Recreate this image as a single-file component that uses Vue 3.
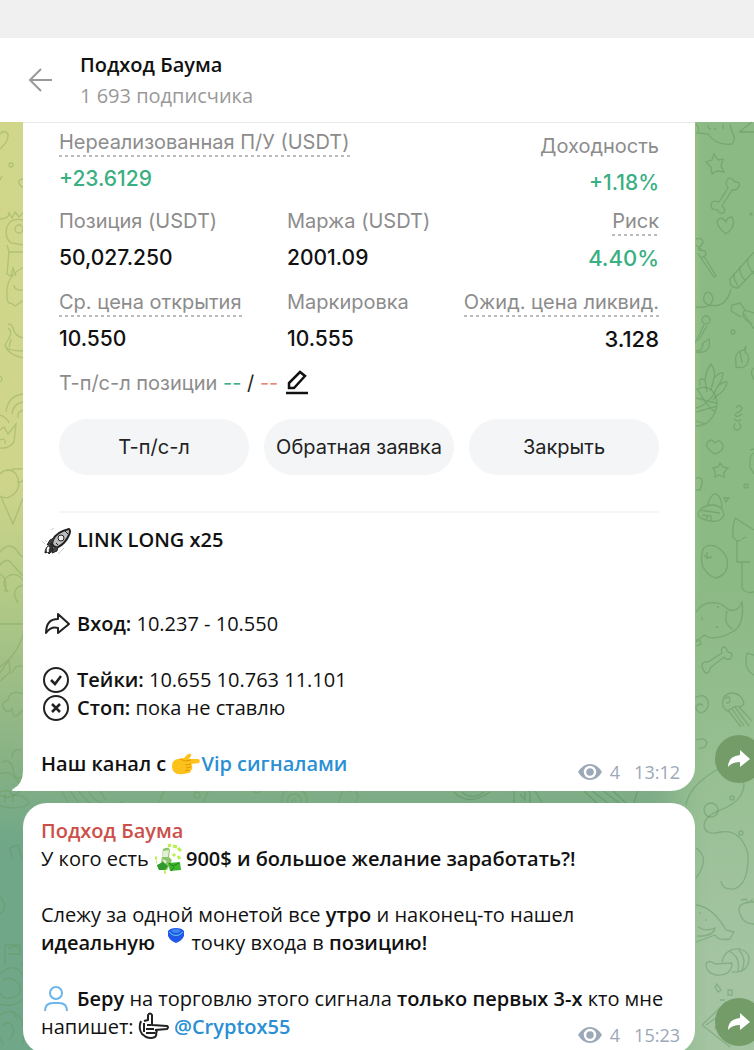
<template>
  <div class="chat-app">
    <div class="top-strip"></div>

    <header class="chat-header">
      <button class="icon-btn" aria-label="Назад">
        <svg width="26" height="26" viewBox="0 0 26 26" fill="none" stroke="#999999" stroke-width="2">
          <path d="M24 13H2M13 2 2 13l11 11" />
        </svg>
      </button>
      <div>
        <h1 class="chat-title">Подход Баума</h1>
        <p class="chat-subtitle">1 693 подписчика</p>
      </div>
    </header>

    <main class="chat-body">
      <!-- Wallpaper doodles -->
      <svg class="doodles doodles-left" width="420" height="928" viewBox="0 0 420 928" aria-hidden="true">
        <path d="M0 12q4-5 8 0 1 7-8 15" />
        <circle cx="11" cy="43" r="2" />
        <path d="M24 57q-6 0-5 4t5 4M0 58l2-4" />
        <path d="M0 97q9 0 9-6l3 5 3-6 4 5 5-5M24 98q-14-3-17 7t4 16l13 2M7 123l2 7h15M9 130l-2 22 4 2 2-8 3 8M24 145q-16 8-17 23t4 13l4 3 9-6M14 163q0 6 10 5" />
        <circle cx="19" cy="107" r="4" />
        <path d="M8 203q3-3 5 3 2 9 11 10M8 206q5 4 1 10l-4 7q1 6 19 6M11 217l-2 8M5 223q3 10 19 13" />
        <path d="M0 254q4 3 0 6M24 272q-16 1-18 18M24 280q-11 1-12 12M0 293q7 2 9 8M24 288q-7 1-6 8" />
        <path d="M0 308l4-3 4 7 8-10-2 18q-5 7-14 6M0 318q6-3 5 4" />
        <path d="M0 352q8-8 16 0 6 11-1 19-8 8-15 3M24 347q-9-1-17 2M1 375l12 27 10-26M17 360q5 1 7-3" />
        <path d="M0 430q11-13 20 3l4 2M0 443q7-9 13 0l11 12M8 470q-9-11 2-17 10-2 14 7M18 481q-9-15 6-18M0 452q8 4 5 18" />
        <path d="M0 502h24M24 506q-3 24-24 39M24 545q-8-4-12 6M0 551l9-13 1 12-10 9" />
        <path d="M24 572q-14-5-16 6-8 2-4 9 4 5 8 0 1 11 7 5 3-4 5-4" />
        <path d="M12 636q0-10 9-8M2 641q5-5 10 2l3 12q12 5 9-16M0 652q9-4 15 4 8 8 5 13-11 10-20 4M6 664h1M13 663h1" />
        <path d="M0 670q10-4 12 3 13-1 17 8-7 8-29 3M5 672v8M13 674v6" />
        <path d="M60 666l10 18M68 666l13 18M76 666l16 18M88 668q5 14 26 15l10-4M98 666l8 12M166 666l-9 17M210 666l-7 14M252 666q3 8 9 3M339 678q5-15 10-8 6-5 9 4-2 12-10 7-8 6-9-3" />
        <circle cx="197" cy="673" r="3" />
        <path d="M282 684q-3-17 12-17t13 17M288 684q-2-12 6-12t7 11M292 681q1-6 4-2" />
        <path d="M12 736l-2-10 8-3 4 14 2 3M0 775q7 7 3 14l-3 3M5 843v-20h15v9H8M8 827l6-3 6 3M0 852q15-14 24 3M0 882q14 4 24-5M3 858q8-5 16 4 3 9-2 12-12 6-17-3M24 837l-2 6" />
        <path d="M0 893q12-9 21 4 6 13 1 26M2 904q7-7 11 1 2 9-4 12M0 915l3 8M12 889l5 8" />
      </svg>
      <svg class="doodles doodles-mid" width="220" height="20" viewBox="0 0 220 20" aria-hidden="true">
        <path d="M10 3q14 15 36 0M18 3q10 9 22 0M70 17V1q10-3 16 2v13M76 5l5 6V3M91 2l9 15M140 2l16 15M148 2l20 15M158 1l21 16M168 1l17 16M194 1l-5 16" />
      </svg>
      <svg class="doodles doodles-right" width="70" height="928" viewBox="0 0 70 928" aria-hidden="true">
        <path d="M12 2q5 5 1 9l11 1q8 12 24 10 5-6 0-12L46 2M24 3q0 4 3 4M30 7h2M39 2v5M55 10 68 0M56 10h14" />
        <path d="M30 32l4 6 5-1-2 7 3 6-7-1-5 3-1-7-5-5 6-2zM42 62q1-8 6-5l3 3q7 0 3 6-3 3-6 2L38 84q5 4 1 7-5 1-5-3-7 0-7-4 0-7 8-4l9-14z" />
        <path d="M42 112q-9-7-9-13 4-6 9 1 1-5 6-5 5 9-6 17zM12 117q7-2 7 4l-5 6M12 123l6 5M14 128l7 1 1 4-5 3-3-5M17 136l13 19 2-1-12-20" />
        <path d="M70 130 46 157q-1 9 8 9l16-17M50 151q-1 5 4 13M56 144q-1 9 6 15M64 137q-2 6 6 15" />
        <path d="M12 185q16 2 17-9-3-9-8-4-4 8 4 11 17 4 22-16M47 189l1-6 8-2 5 7 9 3M47 189l10 6M61 188q-6 7 7 14M60 192l10 15" />
        <circle cx="22" cy="198" r="4" />
        <path d="M20 203l-9 18M23 204l-9 15M12 228q6 3 7-7l6-4q3 15-13 13M52 241q-2-8 4-12l4-1 2-4-1 6q6 4 2 12-3 5-11 3zM56 230l2 11" />
        <circle cx="67" cy="92" r="1" />
        <circle cx="49" cy="210" r="2" />
        <path d="M16 264q-2-10 5-6 1-10 6-16 5 7 3 14 6-6 9-5-1 8-5 13 6-5 9-4-1 9-11 14l-3 4M23 270l-2-12M27 268l3-12M30 271l4-7" />
        <path d="M12 268q5-4 12-2 8 4 9 14 0 12-9 20-5 4-12 4M12 276l20 5M12 290l21-6M13 266q8 16 18 24M31 271q-9 13-19 15M12 299l10 3" />
        <path d="M52 286q3-5 6 0-1 4-6 5M51 292q1 5 7 0M50 297q5 4 7 0M51 301q-3 8 3 7 5-3 1-7M70 246q-5 3 0 12" />
        <path d="M31 332q-10-6-8-11 4-6 8 0 5-5 8 2 1 6-8 9zM36 341l3 4 5 1-4 4 0 5-5-2-4 2 0-5-2-4 5-1zM12 356q7-2 6 6l-2 6h-4M70 331q-5 2-4 14l4 7M66 328l4-1" />
        <circle cx="62" cy="364" r="2" />
        <path d="M23 384q4-13 9-12 6 3 6 14M40 376h5l-3 4zM14 393q2-9 13-10 12 0 13 10-4 8-13 6-12-2-13-6M15 388l21 3M18 393l9 1v5M24 394l-2 4" />
        <path d="M51 396l19 12M51 396q-3 10-2 19 4 6 8 3M53 418v22h13M58 441v25q4 6 12 4M58 417l4-2" />
        <path d="M19 427q4-5 12-3 15 8 12 22-3 9-12 10-18-8-12-29M20 433l3 3 5-1M23 436v-6" />
        <path d="M12 490q8-13 25-8l8 6q11 2 13-9 3 25-10 31-18 10-28 3l-8 7M43 489q-4 14 6 18M18 495v3M33 485h2M32 505h2M12 518q5-1 5 4l-5 2" />
        <path d="M18 544q0-5 6-4l14-9q-2-6 3-6l3 5q7 1 2 7-5 1-6-2l-14 11q0 5-4 5-3-2-4-7zM63 531q-4 17 7 22M63 531l7 2" />
        <path d="M11 576q9-6 13 3 2 9-7 12-6-2-5-7 5-4 7 0M39 585q-2-12 8-14 11 0 13 11-3 4-8 2l-9 5zM41 577q4-4 5 0t-4 4M44 588l13 17M48 587l12 17M51 585l14 19M55 585l13 14" />
        <path d="M12 618q8-3 11 2-1 7-8 6M2 683q3-20 34-37Q58 640 60 663q-1 17-26 26-14 6-14 15 2 10 17 6 20-3 27 22 1 30-14 35-12 1-13-8" />
        <circle cx="27" cy="688" r="7" />
        <circle cx="48" cy="676" r="2" />
        <circle cx="57" cy="711" r="2" />
        <path d="M12 726q15 10 0 30M12 783q17 2 30 25l8 2-4 7q-12 2-15-4l-19 7M14 805q8 5 17 1-2 9-18 8M16 790v2M22 797v2M70 780q-19 0-14 12 3 10 14 10M57 778l5-1 2 4 5-4" />
        <path d="M22 842q2-5 9 0l17-1q0 13-16 12-10-2-10-11zM38 840q3-14 18-13 12 4 8 15-3 9-16 8M45 829q12 6 9 20M55 828q8 9 3 20M33 862l4 6-3 2-3-5zM44 868h4v5h-4zM36 878h5M18 903l24-23M18 903l28 22M22 903l21-15 14 12M40 892l-9 14 16 14" />
      </svg>

      <article class="message">
        <div class="bubble bubble-first">
          <section class="position-card">
            <div class="stat-row stat-row-wide">
              <div class="stat">
                <span class="stat-label hint">Нереализованная П/У (USDT)</span>
                <span class="stat-value profit">+23.6129</span>
              </div>
              <div class="stat stat-end stat-low">
                <span class="stat-label">Доходность</span>
                <span class="stat-value profit">+1.18%</span>
              </div>
            </div>
            <div v-for="(row, i) in statRows" :key="i" class="stat-row">
              <div
                v-for="stat in row"
                :key="stat.label"
                class="stat"
                :class="{ 'stat-end': stat.end }"
              >
                <span class="stat-label" :class="{ hint: stat.hint }">{{ stat.label }}</span>
                <span class="stat-value" :class="{ profit: stat.profit, large: stat.end }">{{ stat.value }}</span>
              </div>
            </div>

            <div class="tpsl-row">
              <span>Т-п/с-л позиции <span class="profit">--</span> <span class="slash">/</span> <span class="loss">--</span></span>
              <button class="icon-btn" aria-label="Изменить">
                <svg width="22" height="26" viewBox="0 0 22 26" fill="none" stroke="#111111" stroke-width="2.500">
                  <path d="M3 18v-5L14 2l5 4L8 18z" />
                  <path d="M0 23h22" />
                </svg>
              </button>
            </div>

            <div class="card-actions">
              <button v-for="action in actions" :key="action" class="btn-action">{{ action }}</button>
            </div>
            <hr class="card-divider">
          </section>

          <div class="message-text">
            <p>
              <svg class="emoji emoji-lead" width="30" height="28" viewBox="0 0 30 28" fill="none" stroke="#222222" stroke-linejoin="round">
                <path d="M12 14q3-8 16-11 2 2 0 6-4 9-11 12-4 1-6-3z" fill="#bdbdbd" stroke-width="2" />
                <path d="M13 12 9 14l-3 5 5-2M17 21l-1 4-5 2 1-5" fill="#444444" />
                <path d="M10 18q-6 3-6 9l3-1 1 2q4-3 4-7z" fill="#333333" />
                <path d="M8 21q-2 2-1 5" stroke="#ffffff" stroke-width="2" />
                <circle cx="20" cy="12" r="3" fill="#eeeeee" />
                <path d="M24 5l3 3M15 17l2 2" />
                <path d="M1 15l3 3M4 14l2 2M17 28l6-6M10 4l3-2" stroke="#cccccc" />
              </svg>
              <b>LINK LONG x25</b>
            </p>
            <p><br></p>
            <p><br></p>
            <p>
              <svg class="emoji emoji-lead" width="30" height="28" viewBox="0 0 30 28" fill="none" stroke="#222222" stroke-width="2" stroke-linejoin="round">
                <path d="M5 23Q5 9 17 9V4l11 10-11 9v-5q-7-2-12 5z" />
              </svg>
              <b>Вход:</b> 10.237 - 10.550
            </p>
            <p><br></p>
            <p>
              <svg class="emoji emoji-lead" width="30" height="28" viewBox="0 0 30 28" fill="none" stroke="#222222" stroke-width="2">
                <circle cx="15" cy="14" r="12" />
                <path d="M10 14l4 4 6-8" stroke-width="2.500" />
              </svg>
              <b>Тейки:</b> 10.655 10.763 11.101
            </p>
            <p>
              <svg class="emoji emoji-lead" width="30" height="28" viewBox="0 0 30 28" fill="none" stroke="#222222" stroke-width="2">
                <circle cx="15" cy="14" r="12" />
                <path d="M11 10l8 8M19 10l-8 8" stroke-width="2.500" />
              </svg>
              <b>Стоп:</b> пока не ставлю
            </p>
            <p><br></p>
            <p>
              <b>Наш канал с <svg class="emoji" width="30" height="28" viewBox="0 0 30 28">
                <path d="M1 16q0-6 6-7l6-1 4-4q4-1 3 2l-2 3h9q3 1 1 4l-8 1q2 1 1 3 1 2-1 3 0 3-3 3-10 3-14-1-2-2-2-6z" fill="#fcc21b" />
                <path d="M20 14l-6 1M20 17l-5 1M18 20l-4 1M9 9l5 2 6-1" fill="none" stroke="#e59600" />
              </svg><a href="#vip">Vip сигналами</a></b>
            </p>
          </div>
          <div class="message-meta">
            <svg width="24" height="18" viewBox="0 0 24 18">
              <path d="M0 9Q5 1 12 1t12 8q-5 8-12 8T0 9z" fill="#9aa8b8" />
              <circle cx="12" cy="9" r="5" fill="none" stroke="#ffffff" stroke-width="2.500" />
            </svg>
            <span>4</span>
            <time>13:12</time>
          </div>
          <svg class="bubble-tail" width="12" height="20" viewBox="0 0 12 20">
            <path d="M12 0v20H1q-2-1 0-2 10-5 10-18z" fill="#ffffff" />
          </svg>
        </div>
        <button class="btn-share" aria-label="Поделиться">
          <svg width="24" height="20" viewBox="0 0 24 20">
            <path d="M1 18Q1 7 13 6V1l10 9-10 8v-5Q5 13 1 18z" fill="#ffffff" />
          </svg>
        </button>
      </article>

      <article class="message">
        <div class="bubble">
          <div class="message-text">
            <p class="author">Подход Баума</p>
            <p>
              У кого есть <svg class="emoji" width="32" height="28" viewBox="0 0 32 28">
                <path d="M9 4q6-3 7 1l-1 7 3 3-5 10H5l-2-4 4-3z" fill="#8bc46b" />
                <path d="M9 6l6-1-1 7H8zM8 14l5 2-2 3" fill="#e4eed6" />
                <path d="M3 20l6-3 5 4-3 4H5z" fill="#2f9b2c" />
                <path d="M14 18l12-1 1 8-11 1z" fill="#3fb52c" />
                <path d="M15 18l4 3 6-3M17 26l3-4" fill="none" stroke="#1d7d18" />
                <path d="M14 1l3-1M19 1l4 1M24 3l3 3M1 13h2M2 17h1M19 9l2 2M24 11l2 3M10 27h2" fill="none" stroke="#b8ef50" stroke-width="3" />
              </svg><b>900$ и большое желание заработать?!</b>
            </p>
            <p><br></p>
            <p>Слежу за одной монетой все <b>утро</b> и наконец-то нашел</p>
            <p>
              <b>идеальную</b> <svg class="emoji" width="26" height="28" viewBox="0 0 26 28">
                <path d="M8 2q2-3 8-3t8 3v5q-2 5-8 7-6-2-8-7z" fill="#2257e8" />
                <path d="M11 2q2-2 5-2t5 2q-2 2-5 2t-5-2z" fill="#3f86ee" />
                <path d="M9 3l4 3q3 1 6 0l4-3" fill="none" stroke="#58c8f5" />
              </svg> точку входа в <b>позицию!</b>
            </p>
            <p><br></p>
            <p>
              <svg class="emoji emoji-lead" width="30" height="28" viewBox="0 0 30 28" fill="none" stroke="#6ab5ea" stroke-width="2">
                <circle cx="15" cy="8" r="6" />
                <path d="M4 26q0-8 8-8h6q8 0 8 8" />
              </svg>
              <b>Беру</b> на торговлю этого сигнала <b>только первых 3-х</b> кто мне
            </p>
            <p>
              напишет: <svg class="emoji" width="30" height="28" viewBox="2 0 30 28" fill="none" stroke="#222222" stroke-width="2" stroke-linejoin="round">
                <path d="M7 8 11 7V2q2-3 4 0v10l15 1q2 1 0 3l-12 1" />
                <path d="M4 8q-3 7 1 13l4 3q5 2 9 0 2-2 1-4 2-2-1-3M7 10v9M10 12h4M9 16h8M9 20h9" />
              </svg> <a href="#cryptox55"><b>@Cryptox55</b></a>
            </p>
          </div>
          <div class="message-meta">
            <svg width="24" height="18" viewBox="0 0 24 18">
              <path d="M0 9Q5 1 12 1t12 8q-5 8-12 8T0 9z" fill="#9aa8b8" />
              <circle cx="12" cy="9" r="5" fill="none" stroke="#ffffff" stroke-width="2.500" />
            </svg>
            <span>4</span>
            <time>15:23</time>
          </div>
        </div>
        <button class="btn-share" aria-label="Поделиться">
          <svg width="24" height="20" viewBox="0 0 24 20">
            <path d="M1 18Q1 7 13 6V1l10 9-10 8v-5Q5 13 1 18z" fill="#ffffff" />
          </svg>
        </button>
      </article>
    </main>
  </div>
</template>

<script setup>
const statRows = [
  [
    { label: 'Позиция (USDT)', value: '50,027.250' },
    { label: 'Маржа (USDT)', value: '2001.09' },
    { label: 'Риск', value: '4.40%', hint: true, profit: true, end: true }
  ],
  [
    { label: 'Ср. цена открытия', value: '10.550', hint: true },
    { label: 'Маркировка', value: '10.555' },
    { label: 'Ожид. цена ликвид.', value: '3.128', hint: true, end: true }
  ]
]

const actions = ['Т-п/с-л', 'Обратная заявка', 'Закрыть']
</script>

<style>
body {
  margin: 0;
}
</style>

<style scoped>
.chat-app {
  display: flex;
  flex-direction: column;
  height: 100vh;
  overflow: hidden;
  font-family: "Open Sans", "Noto Sans", sans-serif;
  font-size: 20px;
  color: #111111;
}

.top-strip {
  flex-shrink: 0;
  height: 38px;
  background: #f0f0f0;
}

.chat-header {
  display: flex;
  flex-shrink: 0;
  align-items: center;
  gap: 26px;
  height: 84px;
  padding: 0 28px;
  background: #ffffff;
}

.chat-title,
.chat-subtitle {
  margin: 0;
  font-size: 20px;
  line-height: 31px;
}

.chat-title {
  font-weight: 600;
}

.chat-subtitle {
  color: #999999;
}

.icon-btn {
  display: flex;
  padding: 0;
  background: none;
  border: none;
  cursor: pointer;
}

/* Wallpaper */
.chat-body {
  position: relative;
  flex: 1;
  min-height: 0;
  overflow: hidden;
  background:
    linear-gradient(to right, transparent 88%, #8cba85 93%),
    linear-gradient(to bottom, #d0d68a 0%, #cfd58a 38%, #b5cb86 50%, #85b085 70%, #6fa788 78%, #6fa788 100%);
}

.chat-body::before {
  content: "";
  position: absolute;
  inset: 0;
  background: linear-gradient(to bottom, transparent 50%, #a4c4a2 90%);
  mask-image: linear-gradient(to right, transparent 86%, #000000 94%);
}

.doodles {
  position: absolute;
  top: 0;
  fill: none;
  stroke: rgba(65, 125, 65, 0.3);
  stroke-width: 1.3;
}

.doodles-left {
  left: 0;
  stroke: rgba(95, 145, 70, 0.28);
}

.doodles-mid {
  top: 667px;
  right: 90px;
}

.doodles-right {
  right: 0;
}

/* Messages */
.message {
  position: relative;
  display: flex;
  align-items: flex-end;
  gap: 20px;
  margin: 0 -9px 12px 23px;
}

.bubble {
  position: relative;
  flex: 1;
  min-width: 0;
  padding: 14px 18px 13px;
  background: #ffffff;
  border-radius: 24px;
}

.bubble-first {
  padding-top: 0;
  border-radius: 0 0 24px 0;
  border-top: 1px solid #e8e8e8;
}

.bubble-tail {
  position: absolute;
  left: -11px;
  bottom: 0;
}

.message-text p {
  margin: 0;
  line-height: 28px;
}

.message-text b {
  font-weight: 600;
}

.message-text .author {
  font-weight: 600;
  color: #cc5049;
}

.message-text a {
  color: #2a8fd5;
  text-decoration: none;
}

.emoji {
  margin-top: -4px;
  overflow: visible;
  vertical-align: middle;
}

.emoji-lead {
  margin-right: 6px;
}

.message-meta {
  position: absolute;
  right: 15px;
  bottom: 7px;
  display: flex;
  align-items: center;
  font-size: 18px;
  line-height: 24px;
  color: #9aa8b8;
}

.message-meta span {
  margin: 0 14px 0 8px;
}

.btn-share {
  display: flex;
  flex-shrink: 0;
  align-items: center;
  justify-content: center;
  width: 48px;
  height: 48px;
  margin-bottom: 8px;
  padding: 0;
  background: #739c69;
  border: none;
  border-radius: 50%;
  cursor: pointer;
}

/* Position card */
.position-card {
  display: flex;
  flex-direction: column;
  padding: 7px 18px 0;
  font-family: Inter, Roboto, sans-serif;
  line-height: 24px;
}

.stat-row {
  display: grid;
  grid-template-columns: 38fr 28fr 34fr;
  margin-bottom: 20px;
}

.stat-row-wide {
  grid-template-columns: 2fr 1fr;
  height: 59px;
}

.stat {
  display: flex;
  flex-direction: column;
  align-items: flex-start;
  gap: 13px;
  white-space: nowrap;
}

.stat-end {
  align-items: flex-end;
}

.stat-low {
  padding-top: 4px;
}

.stat-label {
  position: relative;
  color: #8c8c8c;
}

.hint::after {
  content: "";
  position: absolute;
  right: 0;
  bottom: -3px;
  left: 0;
  height: 2px;
  background: repeating-linear-gradient(to right, #bbbbbb 0 3px, transparent 3px 6px);
}

.stat-value {
  font-size: 21px;
  font-weight: 500;
}

.large {
  font-size: 22px;
}

.profit {
  color: #3aaf82;
}

.loss {
  color: #e8877a;
}

.slash {
  color: #222222;
}

.tpsl-row {
  display: flex;
  align-items: center;
  gap: 8px;
  height: 24px;
  color: #8c8c8c;
}

.card-actions {
  display: flex;
  gap: 15px;
  margin-top: 24px;
}

.btn-action {
  flex: 1 1 0;
  min-width: 0;
  height: 56px;
  padding: 0;
  font-family: inherit;
  font-size: 20px;
  color: #222222;
  white-space: nowrap;
  background: #f4f5f7;
  border: none;
  border-radius: 28px;
  cursor: pointer;
}

.card-divider {
  width: 100%;
  height: 2px;
  margin: 36px 0 13px;
  background: #f5f5f6;
  border: none;
}
</style>
